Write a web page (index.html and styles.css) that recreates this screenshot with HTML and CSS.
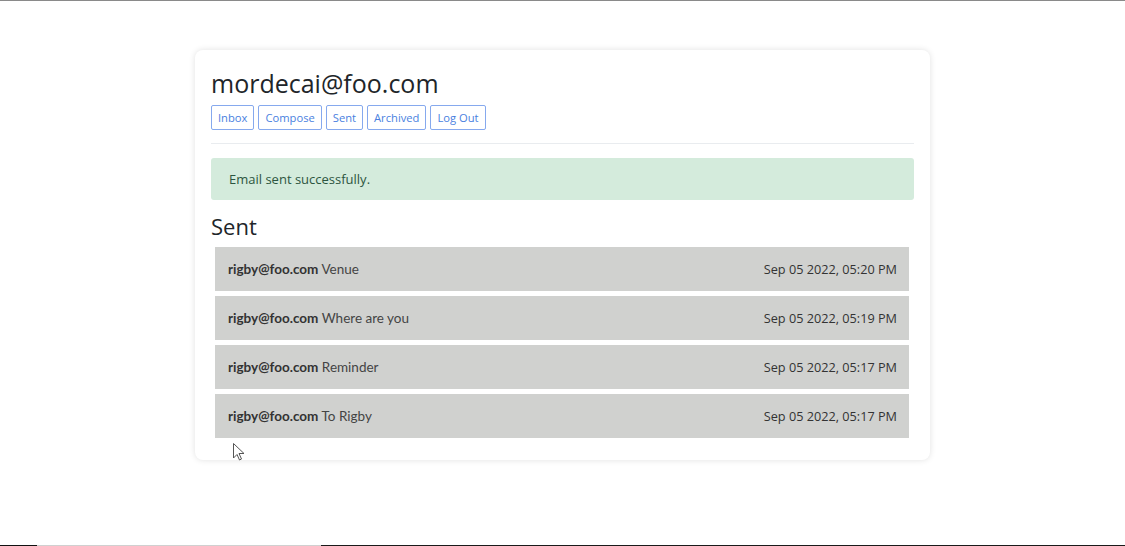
FILE: index.html
```html
<!DOCTYPE html>
<html>
<head>
<meta charset="utf-8">
<link rel="stylesheet" href="styles.css">
</head>
<body>
<div class="page">
  <div class="card">
    <h1 class="title">mordecai@foo.com</h1>
    <nav class="nav">
      <button class="btn">Inbox</button>
      <button class="btn">Compose</button>
      <button class="btn">Sent</button>
      <button class="btn">Archived</button>
      <button class="btn">Log Out</button>
    </nav>
    <hr class="rule">
    <div class="alert">Email sent successfully.</div>
    <h2 class="heading">Sent</h2>
    <div class="list">
      <div class="item"><span><b>rigby@foo.com</b> Venue</span><span class="date">Sep 05 2022, 05:20 PM</span></div>
      <div class="item"><span><b>rigby@foo.com</b> Where are you</span><span class="date">Sep 05 2022, 05:19 PM</span></div>
      <div class="item"><span><b>rigby@foo.com</b> Reminder</span><span class="date">Sep 05 2022, 05:17 PM</span></div>
      <div class="item"><span><b>rigby@foo.com</b> To Rigby</span><span class="date">Sep 05 2022, 05:17 PM</span></div>
    </div>
    <svg class="cursor" width="12" height="18" viewBox="0 0 12 18"><path d="M0.5 0.5 L0.5 15 L4 11.5 L6.5 17 L8.5 16 L6 10.5 L11 10.5 Z" fill="#fff" stroke="#555" stroke-width="1"/></svg>
  </div>
</div>
<div class="taskbar"><span class="t1"></span><span class="t2"></span><span class="t3"></span></div>
</body>
</html>
```
FILE: styles.css
```css
html, body { margin: 0; padding: 0; }
body {
  background: #fff;
  border-top: 1px solid #8a8a8a;
  height: 546px;
  box-sizing: border-box;
  font-family: Lato, "Open Sans", sans-serif;
  color: #212529;
  display: flex;
  flex-direction: column;
}
.page {
  flex: 1;
  display: flex;
  justify-content: center;
  padding-top: 49px;
}
.card {
  position: relative;
  width: 735px;
  height: 410px;
  box-sizing: border-box;
  background: #fff;
  border-radius: 8px;
  box-shadow: 0 0 6px rgba(0,0,0,0.12);
  padding: 16px 16px 0 16px;
}
.title {
  margin: 0;
  font-family: "Open Sans", sans-serif;
  font-weight: 400;
  font-size: 25px;
  line-height: 34px;
  color: #212529;
}
.nav {
  display: flex;
  gap: 4px;
  margin-top: 5px;
}
.btn {
  font-family: "Open Sans", sans-serif;
  font-size: 11.2px;
  color: #4a7fe0;
  background: #fff;
  border: 1px solid #86a9ee;
  border-radius: 2px;
  height: 25px;
  padding: 0 6px;
  line-height: 23px;
}
.rule {
  border: 0;
  border-top: 1px solid #e9ecef;
  margin: 13px 0 14px 0;
}
.alert {
  background: #d4ebdc;
  border-radius: 3px;
  height: 42px;
  box-sizing: border-box;
  padding: 0 18px;
  display: flex;
  align-items: center;
  font-family: "Open Sans", sans-serif;
  font-size: 13px;
  color: #2c5540;
}
.heading {
  margin: 12px 0 7px 0;
  font-family: "Open Sans", sans-serif;
  font-weight: 400;
  font-size: 22px;
  line-height: 28px;
}
.list {
  display: flex;
  flex-direction: column;
  gap: 5px;
  margin: 0 5px 0 4px;
}
.item {
  height: 44px;
  background: #d0d1cf;
  display: flex;
  align-items: center;
  justify-content: space-between;
  padding: 0 12px 0 13px;
  font-size: 13.5px;
  color: #444;
}
.item b { color: #333; font-weight: 700; }
.date { font-family: "Open Sans", sans-serif; font-size: 12.7px; color: #333; }
.cursor {
  position: absolute;
  left: 38px;
  top: 393px;
}
.taskbar {
  height: 1px;
  display: flex;
}
.t1 { width: 37px; background: #111; }
.t2 { width: 284px; background: #d0d0d0; }
.t3 { flex: 1; background: #1a1a1a; }
```
